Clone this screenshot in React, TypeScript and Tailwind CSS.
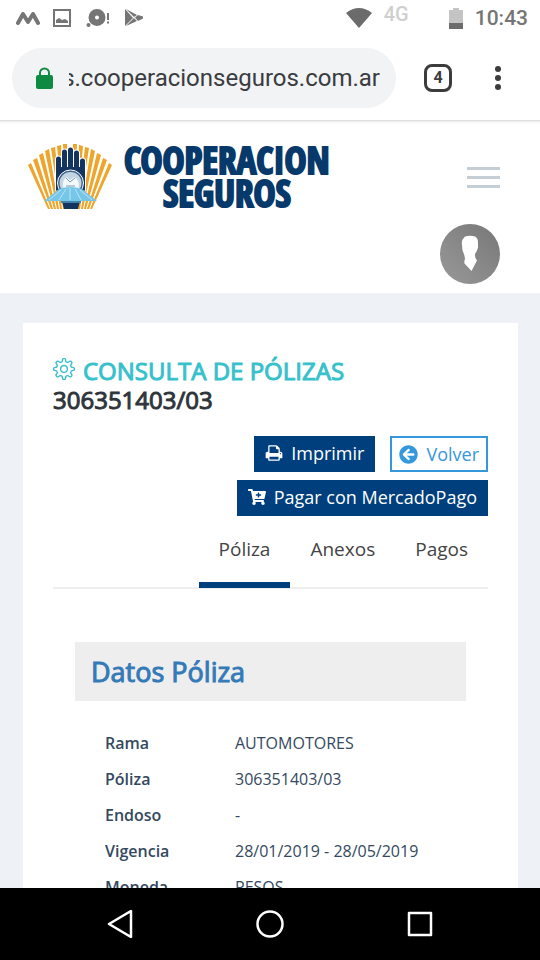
import type { ReactNode } from "react";
import { FaArrowCircleLeft, FaCartPlus } from "react-icons/fa";
import { SlSettings } from "react-icons/sl";

const details: [string, string][] = [
  ["Rama", "AUTOMOTORES"],
  ["Póliza", "306351403/03"],
  ["Endoso", "-"],
  ["Vigencia", "28/01/2019 - 28/05/2019"],
  ["Moneda", "PESOS"],
];

function StatusBar() {
  return (
    <div className="flex h-9 shrink-0 items-center pr-3 pl-4 text-[#757575]">
      <div className="flex flex-1 items-center gap-3">
        <svg width="24" height="16" viewBox="0 0 24 16" fill="none" stroke="currentColor" strokeWidth="4" strokeLinecap="round" strokeLinejoin="round">
          <path d="M2 13 7 4l5 8 5-8 5 9" />
        </svg>
        <svg width="20" height="18" viewBox="0 0 20 18">
          <rect x="2" y="1" width="16" height="16" fill="none" stroke="currentColor" strokeWidth="2" />
          <path d="M4 14v-3l3-2 3 2 3-1 3 2v2z" fill="currentColor" />
        </svg>
        <svg width="26" height="20" viewBox="0 0 26 20" fill="currentColor">
          <path fillRule="evenodd" d="M13 1a8.500 8.500 0 1 1 0 17 8.500 8.500 0 0 1 0-17zm0 6.500a2 2 0 1 0 0 4 2 2 0 0 0 0-4z" />
          <circle cx="4.500" cy="17" r="2" />
          <path d="M23 5h2v7h-2zM23 13.500h2v2h-2z" />
        </svg>
        <svg width="22" height="20" viewBox="0 0 22 20" fill="currentColor">
          <path d="M3 1v17l8-8zM4 1l8 8 3-2zM4 18l8-8 3 3zM13 9.500 16 7l5 1.500v2L16 13z" />
        </svg>
      </div>
      <svg width="26" height="20" viewBox="0 0 26 20" fill="#6b6b6b">
        <path d="M13 20 0 5Q13-5 26 5z" />
      </svg>
      <span className="mr-10 mb-2 ml-3 font-['Roboto',sans-serif] text-[20px] leading-5 font-medium text-[#cfcfcf]">4G</span>
      <svg width="14" height="21" viewBox="0 0 14 21">
        <path d="M4 0h6v2h4v19H0V2h4z" fill="#c4c4c4" />
        <path d="M0 15h14v6H0z" fill="#6b6b6b" />
      </svg>
      <span className="ml-3 font-['Roboto',sans-serif] text-[21px] leading-6 font-medium">10:43</span>
    </div>
  );
}

function BrowserBar() {
  return (
    <div className="flex shrink-0 items-center pt-3 pr-6 pb-3 pl-3">
      <label className="flex h-15 min-w-0 flex-1 items-center gap-4 rounded-full bg-[#f1f3f4] pr-4 pl-6">
        <svg width="17" height="22" viewBox="0 0 17 22" className="shrink-0">
          <rect y="8" width="17" height="14" rx="2" fill="#0f8a43" />
          <path d="M4 9V6a4.500 4.500 0 0 1 9 0v3" fill="none" stroke="#0f8a43" strokeWidth="2" />
        </svg>
        <input
          aria-label="Dirección"
          dir="rtl"
          defaultValue="s.cooperacionseguros.com.ar"
          className="w-full min-w-0 bg-transparent font-['Roboto',sans-serif] text-[24px] leading-8 text-[#3a3c40] outline-none"
        />
      </label>
      <button aria-label="Pestañas" className="ml-7 flex size-7 items-center justify-center rounded-lg border-3 border-[#3c3c3c] font-['Roboto',sans-serif] text-[16px] font-bold text-[#3c3c3c]">4</button>
      <button aria-label="Menú del navegador" className="ml-7 flex w-9 justify-center text-[#3c3c3c]">
        <svg width="6" height="26" viewBox="0 0 6 26" fill="currentColor">
          <circle cx="3" cy="4" r="3" />
          <circle cx="3" cy="13" r="3" />
          <circle cx="3" cy="22" r="3" />
        </svg>
      </button>
    </div>
  );
}

function Emblem() {
  return (
    <svg width="84" height="66" viewBox="0 0 84 66" className="shrink-0">
      <path
        fill="#efa52b"
        d="M20 66 0 22l3-2 19 46zM23 66 5 17l4-2 16 51zM26 66 11 12l4-2 13 56zM29 66 17 8l4-2 10 60zM32 66 23 5l4-1 7 62zM35 66 29 3l4-1 4 64zM38 66 35 1h4l1 65zM44 66 45 1h4l-3 65zM47 66 51 2l4 1-6 63zM50 66 57 4l4 1-9 61zM53 66 63 6l4 2-12 58zM56 66 69 10l4 2-15 54zM59 66 75 15l4 2-18 49zM62 66 81 20l3 2-20 44z"
      />
      <g stroke="#fff" strokeWidth="7" strokeLinecap="round">
        <path d="M30.500 16v30M36.500 9v34M42.500 7v34M48.500 10v34M54.500 18v28" />
      </g>
      <g stroke="#12345f" strokeWidth="5" strokeLinecap="round">
        <path d="M30.500 16v30M36.500 9v34M42.500 7v34M48.500 10v34M54.500 18v28" />
      </g>
      <path d="M29 24h27v24H29z" fill="#12345f" />
      <circle cx="42.500" cy="40" r="13" fill="#3a5f86" stroke="#fff" strokeWidth="1" />
      <circle cx="42.500" cy="40" r="11" fill="#c3d5e2" />
      <path d="M36 48q-3-12 3-14l3 3 4-3q7 3 4 14z" fill="#f3f8fb" />
      <path d="m38 35 4 4 5-4M38 43h9" fill="none" stroke="#7b98b0" />
      <path d="M31 46q11-4 23 0l15 12H16z" fill="#76c6e8" />
      <path d="m33 47-12 10M38 46l-7 11M42 45v12M47 46l6 11M52 47l12 10" stroke="#b9e3f4" />
      <path d="M34 58h18l-2 8H36z" fill="#12345f" />
      <path d="M33 59h20" stroke="#3f84ad" strokeWidth="2" />
    </svg>
  );
}

function SiteHeader() {
  return (
    <header className="flex flex-col bg-white pt-[22px] pr-10 pb-[9px] pl-7 shadow-[inset_0_4px_3px_-3px_#ccc]">
      <div className="flex items-start justify-between">
        <a href="#inicio" aria-label="Cooperacion Seguros" className="flex items-center gap-3">
          <Emblem />
          <span className="flex flex-col items-center pt-px font-['Open_Sans_Condensed','Roboto_Condensed','Roboto',sans-serif] text-[37px] leading-[33px] font-bold text-[#08396b] [-webkit-text-stroke:2px_#08396b]">
            <span>COOPERACION</span>
            <span>SEGUROS</span>
          </span>
        </a>
        <button aria-label="Menú" className="mt-[25px] flex w-[33px] flex-col gap-1.5">
          <span className="h-[3px] w-full bg-[#c5ced4]" />
          <span className="h-[3px] w-full bg-[#c5ced4]" />
          <span className="h-[3px] w-full bg-[#c5ced4]" />
        </button>
      </div>
      <button aria-label="Usuario" className="mt-[15px] size-15 self-end">
        <svg width="60" height="60" viewBox="0 0 60 60">
          <defs>
            <linearGradient id="avatar" x1="1" y1="0" x2="0" y2="1">
              <stop offset="0" stopColor="#777" />
              <stop offset="1" stopColor="#999" />
            </linearGradient>
          </defs>
          <circle cx="30" cy="30" r="30" fill="url(#avatar)" />
          <path d="M25 12.500q5-1.500 10 0 3 1.500 3 6v5q-1 4-3 6.500-.5 4 2 6.500l-5.500 10.500-7-7.500q-.5-2 .5-4.500-.5-4-1.500-6-1.500-3-1.500-8-1-5 3-8.500z" fill="#fff" />
        </svg>
      </button>
    </header>
  );
}

function PrintIcon() {
  return (
    <svg width="18" height="18" viewBox="0 0 1664 1792" fill="currentColor">
      <path d="M384 1536h896v-256H384v256zm0-640h896V512h-160q-40 0-68-28t-28-68V256H384v640zm1152 64q0-26-19-45t-45-19-45 19-19 45 19 45 45 19 45-19 19-45zm128 0v416q0 13-9.500 22.500t-22.500 9.500h-224v160q0 40-28 68t-68 28H352q-40 0-68-28t-28-68v-160H32q-13 0-22.500-9.500T0 1376V960q0-79 56.500-135.500T192 768h64V224q0-40 28-68t68-28h672q40 0 88 20t76 48l152 152q28 28 48 76t20 88v256h64q79 0 135.500 56.500T1664 960z" />
    </svg>
  );
}

function Action({ outline, children }: { outline?: boolean; children: ReactNode }) {
  return (
    <button
      className={
        outline
          ? "flex h-9 items-center gap-2 border-2 border-[#3598dc] px-[7px] text-[18px] text-[#3598dc]"
          : "flex h-9 items-center gap-2 bg-[#003f7d] px-[11px] pb-0.5 text-[18px] text-white"
      }
    >
      {children}
    </button>
  );
}

function Tab({ active, children }: { active?: boolean; children: ReactNode }) {
  return (
    <button
      role="tab"
      aria-selected={!!active}
      className={
        active
          ? "-mb-px h-[59px] border-b-6 border-[#003f7d] px-5 pb-3"
          : "-mb-px h-[59px] border-b-6 border-transparent px-5 pb-3"
      }
    >
      {children}
    </button>
  );
}

function PolicyCard() {
  return (
    <section className="bg-white px-[30px] pt-[33px] pb-8">
      <h1 className="text-[24px] leading-[29px] text-[#2f353b] [-webkit-text-stroke:1px_#2f353b]">
        <span className="flex items-center gap-2 text-[#36c1cc] [-webkit-text-stroke:1px_#36c1cc]">
          <SlSettings size={22} className="mb-1 shrink-0" stroke="none" strokeWidth="0" />
          CONSULTA DE PÓLIZAS
        </span>
        306351403/03
      </h1>
      <div className="mt-[22px] flex flex-wrap justify-end gap-x-[15px] gap-y-2">
        <Action>
          <PrintIcon />
          Imprimir
        </Action>
        <Action outline>
          <FaArrowCircleLeft size={19} className="shrink-0" />
          Volver
        </Action>
        <Action>
          <FaCartPlus size={18} className="shrink-0" />
          Pagar con MercadoPago
        </Action>
      </div>
      <div role="tablist" className="mt-[13px] flex justify-end border-b-2 border-[#eee] text-[19px] text-[#444]">
        <Tab active>Póliza</Tab>
        <Tab>Anexos</Tab>
        <Tab>Pagos</Tab>
      </div>
      <div className="px-[22px] pt-[53px]">
        <h2 className="bg-[#eee] px-4 py-3 text-[27px] leading-[35px] text-[#337ab7] [-webkit-text-stroke:1px_#337ab7]">Datos Póliza</h2>
        <table className="mt-6 ml-[30px] text-left text-[16px] leading-9 text-[#34495e]">
          <tbody>
            {details.map(([label, value]) => (
              <tr key={label}>
                <th scope="row" className="w-[130px] p-0 font-semibold">{label}</th>
                <td className="p-0">{value}</td>
              </tr>
            ))}
          </tbody>
        </table>
      </div>
    </section>
  );
}

function NavigationBar() {
  return (
    <nav className="flex h-18 shrink-0 items-center justify-center gap-[122px] bg-black text-white">
      <button aria-label="Atrás">
        <svg width="28" height="28" viewBox="0 0 28 28" fill="none" stroke="currentColor" strokeWidth="2.500" strokeLinejoin="round">
          <path d="M25 1v26L3 14z" />
        </svg>
      </button>
      <button aria-label="Inicio">
        <svg width="28" height="28" viewBox="0 0 28 28" fill="none" stroke="currentColor" strokeWidth="2.500">
          <circle cx="14" cy="14" r="12.500" />
        </svg>
      </button>
      <button aria-label="Recientes">
        <svg width="28" height="28" viewBox="0 0 28 28" fill="none" stroke="currentColor" strokeWidth="2.500" strokeLinejoin="round">
          <path d="M3 3h22v22H3z" />
        </svg>
      </button>
    </nav>
  );
}

export default function App() {
  return (
    <div className="flex h-screen flex-col overflow-hidden bg-white font-['Open_Sans',sans-serif]">
      <StatusBar />
      <BrowserBar />
      <main className="min-h-0 flex-1 overflow-hidden bg-[#eef1f6]">
        <SiteHeader />
        <div className="pt-[30px] pr-[22px] pl-[23px]">
          <PolicyCard />
        </div>
      </main>
      <NavigationBar />
    </div>
  );
}
